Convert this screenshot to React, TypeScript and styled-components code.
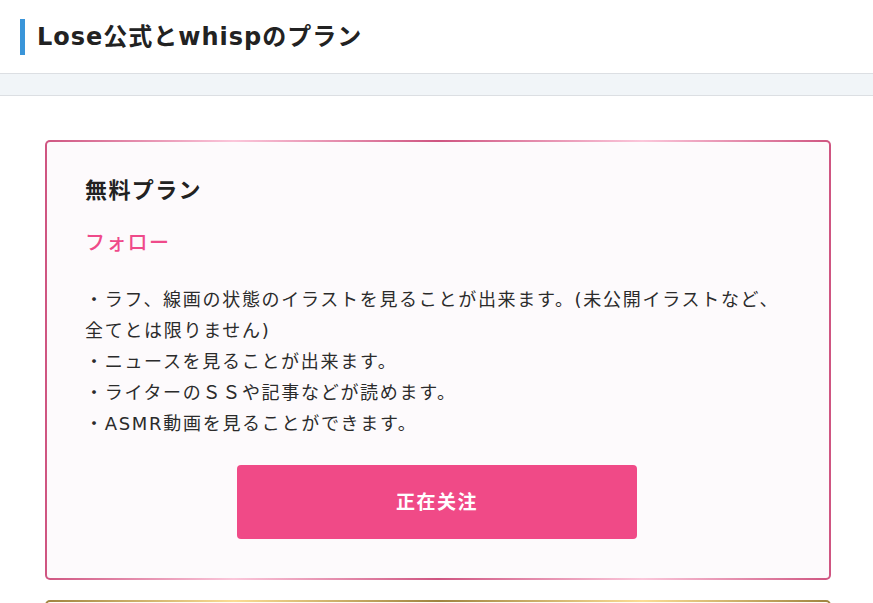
import React from "react";
import styled, { createGlobalStyle } from "styled-components";

const Global = createGlobalStyle`
  html, body { margin: 0; padding: 0; background: #fff; }
  body {
    font-family: "DejaVu Sans", "Noto Sans CJK JP", sans-serif;
    color: #333;
  }
`;

const Page = styled.div`
  width: 873px;
  height: 603px;
  overflow: hidden;
  background: #fff;
`;

const Header = styled.header`
  height: 73px;
  display: flex;
  align-items: center;
  padding-left: 20px;
  box-sizing: border-box;
`;

const Title = styled.h1`
  margin: 0;
  display: flex;
  align-items: center;
  gap: 12px;
  font-size: 24px;
  font-weight: 700;
  letter-spacing: 1px;
  color: #222;
  line-height: 36px;
  &::before {
    content: "";
    display: block;
    width: 5px;
    height: 36px;
    background: #3a95d9;
  }
`;

const Band = styled.div`
  height: 21px;
  background: #f1f5f8;
  border-top: 1px solid #dcdfe3;
  border-bottom: 1px solid #dcdfe3;
`;

const Content = styled.main`
  padding: 44px 42px 0 45px;
  display: flex;
  flex-direction: column;
  gap: 20px;
`;

const PlanCard = styled.section<{ $c1: string; $c2: string; $bg: string }>`
  border: 2.5px solid transparent;
  border-radius: 5px;
  background:
    linear-gradient(${(p) => p.$bg}, ${(p) => p.$bg}) padding-box,
    linear-gradient(90deg, ${(p) => p.$c1} 0%, ${(p) => p.$c2} 24%, ${(p) => p.$c1} 50%, ${(p) => p.$c2} 76%, ${(p) => p.$c1} 100%) border-box;
  padding: 34px 40px 39px 38px;
  display: flex;
  flex-direction: column;
`;

const PlanName = styled.h2`
  margin: 0;
  font-size: 22px;
  font-weight: 700;
  letter-spacing: 1.4px;
  line-height: 30px;
  color: #222;
`;

const PlanType = styled.div`
  margin-top: 22px;
  font-size: 20px;
  font-weight: 500;
  letter-spacing: 1.3px;
  line-height: 30px;
  color: #ef4a8a;
`;

const Desc = styled.p`
  margin: 26px 0 0;
  font-size: 18px;
  letter-spacing: 1.7px;
  line-height: 31px;
  color: #2b2b2b;
`;

const FollowButton = styled.button`
  align-self: center;
  margin-top: 26px;
  width: 400px;
  height: 74px;
  padding: 0 0 3px;
  border: none;
  border-radius: 4px;
  background: #f04a87;
  color: #fff;
  font-family: "DejaVu Sans", "Noto Sans CJK SC", sans-serif;
  font-size: 19px;
  font-weight: 700;
  letter-spacing: 1.5px;
  cursor: pointer;
`;

export default function App() {
  return (
    <Page>
      <Global />
      <Header>
        <Title>Lose公式とwhispのプラン</Title>
      </Header>
      <Band />
      <Content>
        <PlanCard $c1="#cf5581" $c2="#fbc6da" $bg="#fdfafc">
          <PlanName>無料プラン</PlanName>
          <PlanType>フォロー</PlanType>
          <Desc>
            ・ラフ、線画の状態のイラストを見ることが出来ます。(未公開イラストなど、全てとは限りません)
            <br />
            ・ニュースを見ることが出来ます。
            <br />
            ・ライターのＳＳや記事などが読めます。
            <br />
            ・ASMR動画を見ることができます。
          </Desc>
          <FollowButton>正在关注</FollowButton>
        </PlanCard>
        <PlanCard $c1="#9f8440" $c2="#fbdc94" $bg="#fffdf8">
          <PlanName>&nbsp;</PlanName>
        </PlanCard>
      </Content>
    </Page>
  );
}
